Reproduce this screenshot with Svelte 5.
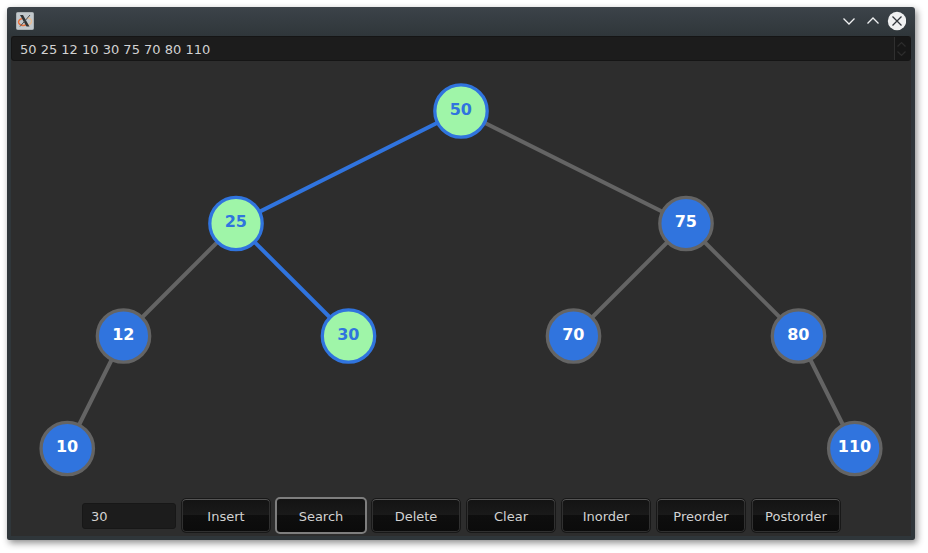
<script>
  const nodes = [
    { value: 50, x: 450, y: 50, found: true },
    { value: 25, x: 225, y: 162.5, found: true, parent: 0 },
    { value: 75, x: 675, y: 162.5, parent: 0 },
    { value: 12, x: 112.5, y: 275, parent: 1 },
    { value: 30, x: 337.5, y: 275, found: true, parent: 1 },
    { value: 70, x: 562.5, y: 275, parent: 2 },
    { value: 80, x: 787.5, y: 275, parent: 2 },
    { value: 10, x: 56.25, y: 387.5, parent: 3 },
    { value: 110, x: 843.75, y: 387.5, parent: 6 }
  ];
  const edges = nodes.filter((n) => n.parent !== undefined);
  const actions = ['Insert', 'Search', 'Delete', 'Clear', 'Inorder', 'Preorder', 'Postorder'];
  let active = $state('Search');
</script>

<div class="desktop">
  <main class="window">
    <header>
      <svg class="logo" width="18" height="18" viewBox="0 0 18 18">
        <rect x=".5" y=".5" width="17" height="17" rx="1" fill="#c2c8cc" stroke="#aab0b3" />
        <path d="M6.500 6.500C3.500 7 2 9 2.700 11c.9 2.300 4.500 3 7.300 1.800" fill="none" stroke="#e8703c" stroke-width="1.500" />
        <path d="M11 6c3.500 0 5 2 4.500 4-.6 2-3 3-5 2.800" fill="none" stroke="#e6bd98" stroke-width="1.300" />
        <path d="M4 3h3l6.500 11.500h-3z" fill="#303335" />
        <path d="M14 3 4 14.500" stroke="#4b4f52" stroke-width="1" />
      </svg>
      <svg class="controls" width="66" height="20" viewBox="0 0 66 20" fill="none" stroke="#eff0f1" stroke-width="1.300">
        <path d="m3.500 7.500 5.500 5.500 5.500-5.500M27.500 12.500 33 7l5.500 5.500" />
        <circle cx="57" cy="10" r="9.200" />
        <path d="m52.500 5.500 9 9m0-9-9 9" stroke="#31363b" />
      </svg>
    </header>
    <section class="content">
      <div class="values">
        <span>50 25 12 10 30 75 70 80 110</span>
        <svg width="15" height="23" viewBox="0 0 15 23" fill="none" stroke="#2d2d2d" stroke-width="1.200">
          <path d="m2.500 9.500 4-4 4 4M2.500 14.500l4 4 4-4" />
        </svg>
      </div>
      <svg class="tree" width="900" height="434" viewBox="0 0 900 434">
        {#each edges as n}
          <line x1={nodes[n.parent].x} y1={nodes[n.parent].y} x2={n.x} y2={n.y} class:found={n.found} />
        {/each}
        {#each nodes as n}
          <g class:found={n.found}>
            <circle cx={n.x} cy={n.y} r="26.2" />
            <text x={n.x - 0.2} y={n.y + 3.8}>{n.value}</text>
          </g>
        {/each}
      </svg>
      <div class="toolbar">
        <div class="field">30</div>
        {#each actions as action}
          <button class:active={active === action} onclick={() => (active = action)}>{action}</button>
        {/each}
      </div>
    </section>
  </main>
</div>

<style>
  :global(body) { margin: 0; background: #fff; }
  .desktop {
    box-sizing: border-box;
    width: 928px;
    height: 553px;
    padding: 7px;
    overflow: hidden;
    font: 13px "DejaVu Sans", sans-serif;
    color: #d2d2d2;
  }
  .window {
    box-sizing: border-box;
    width: 908px;
    height: 533px;
    padding: 0 4px 4px;
    border-radius: 3px 3px 2px 2px;
    background: linear-gradient(#3c4349, #2f363a 29px);
    box-shadow: 2px 3px 7px rgba(0, 0, 0, .45);
  }
  header {
    height: 29px;
    display: flex;
    align-items: center;
    justify-content: space-between;
    padding: 0 5px 1px 5px;
    box-sizing: border-box;
  }
  .content { height: 500px; background: #2d2d2d; }
  .values {
    display: flex;
    justify-content: space-between;
    box-sizing: border-box;
    height: 25px;
    padding-left: 8px;
    border: 1px solid #151515;
    border-radius: 3px;
    background: #1c1c1c;
    line-height: 25px;
  }
  .values svg { border-left: 1px solid #303030; background: #171717; }
  .tree { display: block; }
  line { stroke: #646464; stroke-width: 4; }
  line.found { stroke: #3074de; }
  .tree circle { fill: #3074de; stroke: #646464; stroke-width: 3.3; }
  .tree .found circle { fill: #9ff5a8; stroke: #3074de; }
  text { font: bold 16px "DejaVu Sans", sans-serif; fill: #fff; text-anchor: middle; }
  .found text { fill: #3074de; }
  .controls circle { fill: #eff0f1; stroke: none; }
  .toolbar { display: flex; align-items: center; height: 41px; padding-left: 71px; }
  .field {
    box-sizing: border-box;
    width: 94px;
    height: 26px;
    margin-right: 5px;
    padding-left: 8px;
    border: 1px solid #171717;
    border-radius: 3px;
    background: #1c1c1c;
    line-height: 26px;
  }
  button {
    box-sizing: border-box;
    width: 90px;
    height: 35px;
    margin: 0 5px 0 0;
    padding: 2px 0 0;
    border: 1px solid #181818;
    border-radius: 5px;
    background: linear-gradient(#131313, #1a1a1a 50%, #0e0e0e 50%, #0b0b0b);
    box-shadow: inset 0 1px #555, inset 0 0 0 1px #303030;
    font: inherit;
    color: inherit;
  }
  button.active {
    width: 92px;
    height: 37px;
    margin: 0 4px 0 -1px;
    border: 2px solid #7e7e7e;
    box-shadow: none;
  }
</style>
